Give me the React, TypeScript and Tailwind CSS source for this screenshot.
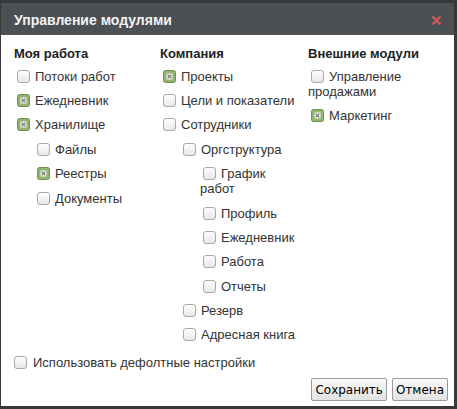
import React from "react";

type Item = { label: string; level: 0 | 1 | 2; checked?: boolean };

const Box = ({ checked }: { checked?: boolean }) => (
  <span className="inline-block w-[13px] h-[13px] ml-[3px] mr-[5px] align-[-2px]">
    <svg width="13" height="13" viewBox="0 0 13 13">
      <defs>
        <linearGradient id="ug" x1="0" y1="0" x2="0" y2="1">
          <stop offset="0" stopColor="#ffffff" />
          <stop offset="1" stopColor="#e6e6e6" />
        </linearGradient>
      </defs>
      {checked ? (
        <>
          <rect x="0.5" y="0.5" width="12" height="12" rx="2" fill="#8fb56e" stroke="#6f8f55" />
          <rect x="3.5" y="3.5" width="6" height="6" fill="#f2f2f2" />
          <path d="M4.6 4.6 L8.4 8.4 M8.4 4.6 L4.6 8.4" stroke="#7a7a7a" strokeWidth="1.3" />
        </>
      ) : (
        <rect x="0.5" y="0.5" width="12" height="12" rx="2.5" fill="url(#ug)" stroke="#a9a9a9" />
      )}
    </svg>
  </span>
);

const levelCls = ["pl-0", "pl-5", "pl-10 pr-[12px]"];

const Column = ({ title, items, w }: { title: string; items: Item[]; w: string }) => (
  <div className={w}>
    <div className="font-bold text-[13px] leading-[17px] text-[#222] mb-[2px]">{title}</div>
    {items.map((it, i) => (
      <div key={i} className={`leading-[15px] py-[4.7px] ${levelCls[it.level]}`}>
        <Box checked={it.checked} />
        {it.label}
      </div>
    ))}
  </div>
);

export default function App() {
  const col1: Item[] = [
    { label: "Потоки работ", level: 0 },
    { label: "Ежедневник", level: 0, checked: true },
    { label: "Хранилище", level: 0, checked: true },
    { label: "Файлы", level: 1 },
    { label: "Реестры", level: 1, checked: true },
    { label: "Документы", level: 1 },
  ];
  const col2: Item[] = [
    { label: "Проекты", level: 0, checked: true },
    { label: "Цели и показатели", level: 0 },
    { label: "Сотрудники", level: 0 },
    { label: "Оргструктура", level: 1 },
    { label: "График работ", level: 2 },
    { label: "Профиль", level: 2 },
    { label: "Ежедневник", level: 2 },
    { label: "Работа", level: 2 },
    { label: "Отчеты", level: 2 },
    { label: "Резерв", level: 1 },
    { label: "Адресная книга", level: 1 },
  ];
  const col3: Item[] = [
    { label: "Управление продажами", level: 0 },
    { label: "Маркетинг", level: 0, checked: true },
  ];
  return (
    <div
      className="w-[457px] h-[409px] bg-[#383838] pt-[3px] pl-[1px] pr-[3px] pb-[3px] overflow-hidden"
      style={{ fontFamily: '"Liberation Sans", Arial, sans-serif' }}
    >
      <div className="h-full flex flex-col bg-white">
        <div className="h-[32px] bg-[#4b5055] flex items-center justify-between pl-[13px] pr-[12px] pt-[3px]">
          <span className="text-[#f3f3f3] font-bold text-[14px]">Управление модулями</span>
          <svg width="11" height="11" viewBox="0 0 11 11">
            <path d="M1.5 1.5 L9.5 9.5 M9.5 1.5 L1.5 9.5" stroke="#d2585a" strokeWidth="2.4" />
          </svg>
        </div>
        <div className="flex-1 flex flex-col pl-[13px] pt-[10px] text-[13px] text-[#333]">
          <div className="flex">
            <Column title="Моя работа" items={col1} w="w-[146px]" />
            <Column title="Компания" items={col2} w="w-[148px]" />
            <Column title="Внешние модули" items={col3} w="w-[138px]" />
          </div>
          <div className="mt-[8px] leading-[15px]">
            <span className="inline-block w-[13px] h-[13px] mr-[6px] align-[-2px]">
              <svg width="13" height="13" viewBox="0 0 13 13">
                <defs>
                  <linearGradient id="ug2" x1="0" y1="0" x2="0" y2="1">
                    <stop offset="0" stopColor="#ffffff" />
                    <stop offset="1" stopColor="#e6e6e6" />
                  </linearGradient>
                </defs>
                <rect x="0.5" y="0.5" width="12" height="12" rx="2.5" fill="url(#ug2)" stroke="#a9a9a9" />
              </svg>
            </span>
            Использовать дефолтные настройки
          </div>
          <div
            className="flex justify-end gap-[5px] pr-[6px] mt-[8px]"
            style={{ fontFamily: '"DejaVu Sans", sans-serif' }}
          >
            <button className="h-[23px] px-[3px] text-[12px] text-black border border-[#9a9a9a] rounded-[2px] bg-gradient-to-b from-[#fafafa] to-[#e2e2e2]">
              Сохранить
            </button>
            <button className="h-[23px] px-[3px] text-[12px] text-black border border-[#9a9a9a] rounded-[2px] bg-gradient-to-b from-[#fafafa] to-[#e2e2e2]">
              Отмена
            </button>
          </div>
        </div>
      </div>
    </div>
  );
}
